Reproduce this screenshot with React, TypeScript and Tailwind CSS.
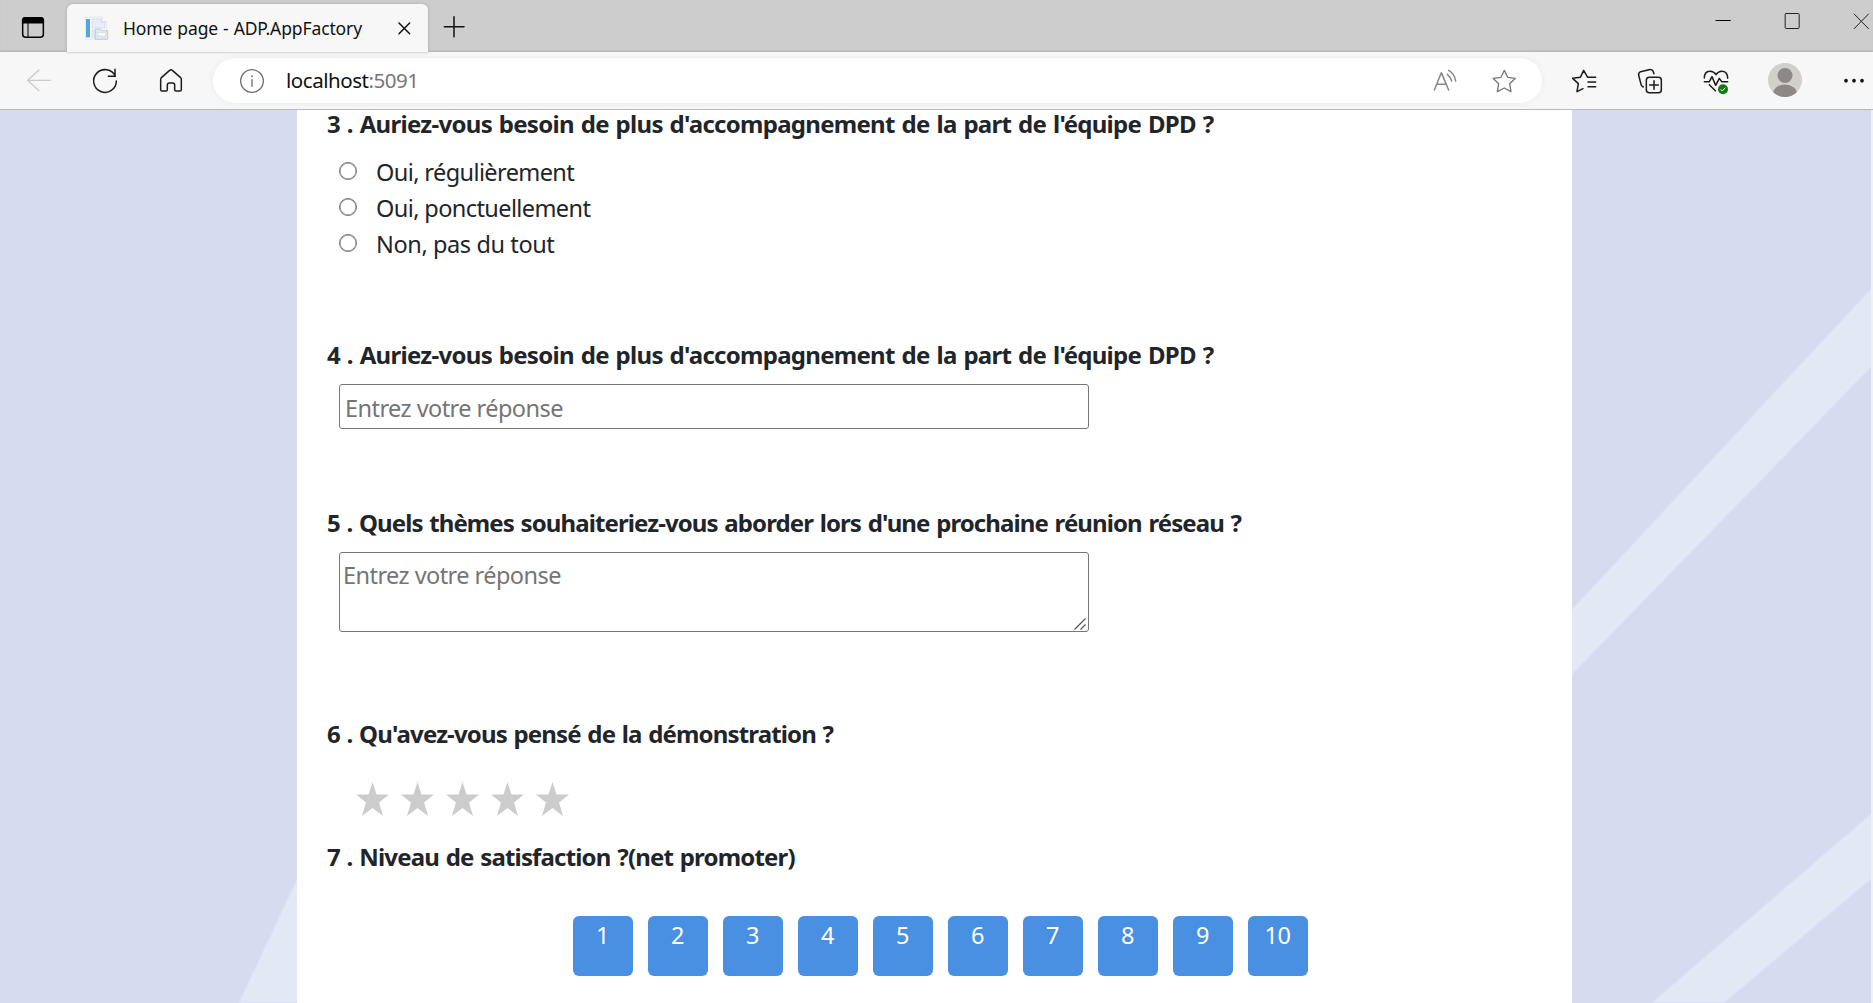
import React from "react";

const FONT = "font-['Noto_Sans','Open_Sans',sans-serif]";

type IconProps = {
  box: string;
  color?: string;
  width?: number;
  className?: string;
  children: React.ReactNode;
};

function Icon({ box, color = "#1b1b1b", width = 4.5, className = "size-7", children }: IconProps) {
  return (
    <svg
      viewBox={box}
      className={`shrink-0 ${className}`}
      fill="none"
      stroke={color}
      strokeWidth={width}
      strokeLinecap="round"
      strokeLinejoin="round"
    >
      {children}
    </svg>
  );
}

function TabStrip() {
  return (
    <div className="flex h-[52px] bg-[#cdcdcd] shadow-[inset_0_-2px_2px_-1px_#b0b0b0]">
      <div className="flex w-[67px] items-center pt-1 pl-[19px]">
        <Icon box="57 42 84 84" color="#000">
          <rect x="68" y="53" width="62" height="59" rx="9" />
          <path d="M68 68V61Q68 53 77 53H121Q130 53 130 61V68Z" fill="#000" />
          <path d="M84 68V112" strokeWidth="3" />
        </Icon>
      </div>
      <div className="relative mt-1 flex w-[361px] items-center rounded-t-[6px] bg-[#f7f7f7] pl-[15px] shadow-[0_0_3px_#a8a8a8]">
        <svg viewBox="246 42 84 84" className="size-7 shrink-0" fill="none" strokeWidth="2">
          <path d="M256 51H306L319 64V117H256Z" fill="#f5f8fc" stroke="#dce1e8" />
          <path d="M306 51V64H319" stroke="#c9ced6" fill="#fff" />
          <path d="M258 57H270V112H258Z" fill="#55a5da" />
          <path d="M276 57H303V68H314V84H276ZM276 91H284V112H276Z" fill="#e9edf5" stroke="#cfd5df" />
          <path d="M286 87H301L305 92H323V118H286Z" fill="#e2e8f0" stroke="#b4bdca" />
          <path d="M293 98H317V108H293Z" fill="#fff" stroke="#cbd3dd" />
        </svg>
        <span className="-mt-px ml-[13px] w-[267px] shrink-0 text-[17.5px] leading-6 tracking-[-0.12px] whitespace-nowrap text-[#111] [word-spacing:0.6px]">
          Home page - ADP.AppFactory
        </span>
        <Icon box="1170 42 84 84" className="size-7" color="#111">
          <path d="M1197 69L1229 101M1229 69L1197 101" />
        </Icon>
      </div>
      <div className="ml-3 flex items-center pt-[2px]">
        <Icon box="1319 39 84 84" color="#111">
          <path d="M1361 50V110M1332 80H1391" />
        </Icon>
      </div>
      <div className="ml-auto flex h-[42px] items-center gap-[41px]">
        <Icon box="1009 21 84 84" color="#000" width={3}>
          <path d="M1030 61.5H1073" />
        </Icon>
        <Icon box="1216 21 84 84" color="#222" width={3}>
          <rect x="1237.5" y="40.500" width="42" height="45" rx="3" />
        </Icon>
        <Icon box="1423 21 77 84" color="#222" width={3} className="h-7 w-[26px]">
          <path d="M1444 42L1487 86M1487 42L1444 86" />
        </Icon>
      </div>
    </div>
  );
}

function Toolbar() {
  return (
    <div className="flex h-[58px] items-center border-b border-[#b9b9b9] bg-[#f7f7f7]">
      <div className="flex gap-[38px] pl-[25px]">
        <Icon box="75 198 84 84" color="#cbcbcb" width={4}>
          <path d="M152 238H83M117 207L83 238L117 269" />
        </Icon>
        <Icon box="273 198 84 84">
          <path d="M346 226A34 34 0 1 0 349 240M345 205V226H325" />
        </Icon>
        <Icon box="471 198 84 84">
          <path d="M482 236Q482 232 485 229L509 208Q513 205 517 208L541 229Q544 232 544 236V266Q544 270 540 270H528Q524 270 524 266V252Q524 246 518 246H508Q502 246 502 252V266Q502 270 498 270H486Q482 270 482 266Z" />
        </Icon>
      </div>
      <div className="ml-7 flex h-[45px] w-[1329px] items-center rounded-full bg-white pr-6 pl-[25px] shadow-[0_0_6px_#ebebeb]">
        <Icon box="714 198 84 84" color="#6f6f6f" width={4}>
          <circle cx="756" cy="240" r="34" />
          <path d="M756 236V256" />
          <circle cx="756" cy="226" r="1" />
        </Icon>
        <span className="-mt-0.5 ml-5 text-[20.5px] leading-7 tracking-[-0.46px] whitespace-nowrap text-[#111]">
          localhost<span className="text-[#767676]">:5091</span>
        </span>
        <div className="ml-auto flex gap-[31px]">
          <Icon box="174 198 84 84" color="#858585">
            <path d="M184 267L205 215L227 267M191 250H219M223 220Q232 227 236 240M227 208Q244 217 248 240" />
          </Icon>
          <Icon box="352 199 84 84" color="#777" width={4}>
            <path d="M395 209L405 230L428 233L411 249L415 273L395 262L374 273L378 249L361 233L385 230Z" />
          </Icon>
        </div>
      </div>
      <div className="ml-7 flex items-center gap-[38px]">
        <Icon box="591 199 84 84">
          <path d="M644 230L632 209L622 230L599 233L616 249L612 273L630 264M645 230H668M645 244H668M645 258H668" />
        </Icon>
        <Icon box="789 199 84 84">
          <rect x="820" y="230" width="45" height="46" rx="9" />
          <path d="M843 240V266M830 253H856M811 259Q805 256 804 251L797 223Q796 216 803 213L828 207Q836 205 840 211L843 219" />
        </Icon>
        <Icon box="987 199 84 84">
          <path d="M994 232Q994 213 1010 212Q1021 211 1029 222Q1037 211 1048 212Q1064 213 1064 233M994 243H1009L1017 228L1028 254L1039 233L1046 243H1064M1009 252L1027 270" />
          <circle cx="1050" cy="266" r="15" fill="#107c10" stroke="none" />
          <path d="M1044 267L1048 271L1056 262" stroke="#fff" strokeWidth="3" />
        </Icon>
        <svg viewBox="0 0 34 34" className="-mt-px size-[34px] shrink-0">
          <clipPath id="avatar">
            <circle cx="17" cy="17" r="17" />
          </clipPath>
          <g clipPath="url(#avatar)">
            <rect width="34" height="34" fill="#d2d0cd" />
            <circle cx="17" cy="12.500" r="7.500" fill="#8d8885" />
            <ellipse cx="17" cy="31" rx="12" ry="9.500" fill="#8d8885" />
          </g>
        </svg>
        <Icon box="1401 199 84 84" className="-mr-4 size-7">
          <g fill="#111" stroke="none">
            <circle cx="1419" cy="240" r="5.500" />
            <circle cx="1443" cy="240" r="5.500" />
            <circle cx="1467" cy="240" r="5.500" />
          </g>
        </Icon>
      </div>
    </div>
  );
}

function Question({ spacing, children }: { spacing: string; children: React.ReactNode }) {
  return (
    <h2 className={`h-8 text-2xl leading-7 font-bold whitespace-nowrap [word-spacing:1.3px] ${spacing}`}>
      {children}
    </h2>
  );
}

function Backdrop() {
  return (
    <svg viewBox="0 110 1873 893" className="absolute inset-0 size-full blur-[1px]" preserveAspectRatio="none">
      <g fill="#e2e9f5" stroke="#e5eafb" strokeWidth="2">
        <path d="M1562 622L1881 280V355L1562 683Z" />
        <path d="M1643 1012L1881 807V869L1711 1012Z" />
        <path d="M307 861L236 1012H307Z" />
      </g>
    </svg>
  );
}

const options = [
  { label: "Oui, régulièrement", spacing: "tracking-[-0.6px]" },
  { label: "Oui, ponctuellement", spacing: "tracking-[-0.6px]" },
  { label: "Non, pas du tout", spacing: "tracking-[-0.4px]" },
];

export default function App() {
  return (
    <div className={`flex h-[1003px] w-[1873px] flex-col overflow-hidden ${FONT}`}>
      <TabStrip />
      <Toolbar />
      <div className="relative flex flex-1 overflow-hidden bg-[#d6dbf0]">
        <Backdrop />
        <main className="relative ml-[297px] w-[1275px] bg-white pl-[30px] text-[#212529]">
          <Question spacing="tracking-[-0.71px]">
            3 . Auriez-vous besoin de plus d'accompagnement de la part de l'équipe DPD ?
          </Question>
          <div className="mt-3 pl-3">
            {options.map((o) => (
              <label key={o.label} className="flex h-9 items-center">
                <span className="mb-[3px] size-[18px] rounded-full border-[1.5px] border-[#767676] shadow-[inset_0_0_0_0.5px_#767676]" />
                <span className={`ml-[19px] text-[23.5px] leading-9 ${o.spacing}`}>{o.label}</span>
              </label>
            ))}
          </div>
          <div className="mt-[79px]">
            <Question spacing="tracking-[-0.71px]">
              4 . Auriez-vous besoin de plus d'accompagnement de la part de l'équipe DPD ?
            </Question>
            <input
              className="mt-[11px] ml-3 block h-[45px] w-[750px] rounded-[3px] border border-[#767676] pt-[2px] pl-[5px] text-[23.5px] tracking-[-0.55px] placeholder:text-[#757575]"
              placeholder="Entrez votre réponse"
            />
          </div>
          <div className="mt-[80px]">
            <Question spacing="tracking-[-0.9px]">
              5 . Quels thèmes souhaiteriez-vous aborder lors d'une prochaine réunion réseau ?
            </Question>
            <div className="relative mt-[11px] ml-3 h-20 w-[750px]">
              <textarea
                className="block size-full resize-none rounded-[3px] border border-[#767676] pt-1 pl-[3px] text-[23.5px] leading-9 tracking-[-0.55px] placeholder:text-[#757575]"
                placeholder="Entrez votre réponse"
              />
              <svg viewBox="0 0 12 12" className="absolute right-[3px] bottom-[2px] size-3" stroke="#555" strokeWidth="1.200">
                <path d="M0.500 11.500L11.500 0.500M6.500 11.500L11.500 6.500" />
              </svg>
            </div>
          </div>
          <div className="mt-[88px]">
            <Question spacing="tracking-[-0.86px]">6 . Qu'avez-vous pensé de la démonstration ?</Question>
            <div className="mt-[30px] ml-[29px] flex gap-3">
              {[1, 2, 3, 4, 5].map((n) => (
                <svg key={n} viewBox="0 0 33 34" className="h-[34px] w-[33px]" fill="#ccc">
                  <path d="M16.500 0L20.500 12.500H33L23 20.500L27 34L16.500 26L6 34L10 20.500L0 12.500H12.500Z" />
                </svg>
              ))}
            </div>
          </div>
          <div className="mt-[27px]">
            <Question spacing="tracking-[-0.83px]">7 . Niveau de satisfaction ?(net promoter)</Question>
            <div className="mt-[41px] ml-[246px] flex gap-[15px]">
              {[1, 2, 3, 4, 5, 6, 7, 8, 9, 10].map((n) => (
                <button
                  key={n}
                  className="flex h-[60px] w-[60px] justify-center rounded-[6px] bg-[#4a90e2] pr-px text-[23.5px] leading-[39px] tracking-[-0.5px] text-white"
                >
                  {n}
                </button>
              ))}
            </div>
          </div>
        </main>
        <div className="relative ml-auto w-[2px] bg-[#f1f1f1]" />
      </div>
    </div>
  );
}
